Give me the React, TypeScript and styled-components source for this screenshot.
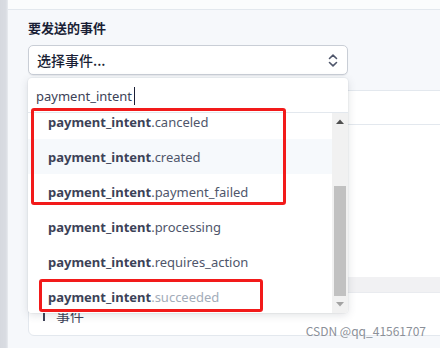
import React from "react"
import styled, {createGlobalStyle} from "styled-components"

const GlobalStyle = createGlobalStyle`
    html, body {
        margin: 0;
        padding: 0;
        background: #f6f8fb;
        overflow: hidden;
    }
    * {
        box-sizing: border-box;
    }
`

const FONT = `"Noto Sans", "Noto Sans CJK SC", sans-serif`

const Page = styled.div`
    position: relative;
    display: flex;
    width: 440px;
    height: 348px;
    font-family: ${FONT};
    color: #3c4257;
`

const SideStrip = styled.div`
    width: 8px;
    flex-shrink: 0;
    background: linear-gradient(to right, #d6d9df 0%, #d9dce2 75%, #e9ecf0 100%);
`

const Main = styled.div`
    flex: 1;
    display: flex;
    flex-direction: column;
    overflow: hidden;
`

const TopBar = styled.div`
    height: 10px;
    flex-shrink: 0;
    background: #fbfcfd;
    border-bottom: 1px solid #e3e8ee;
`

const Header = styled.div`
    padding: 9px 20px 0 20px;
    display: flex;
    flex-direction: column;
`

const Title = styled.h3`
    margin: 0 0 8px 0;
    font-family: "Noto Sans CJK SC", sans-serif;
    font-size: 13px;
    font-weight: 700;
    line-height: 18px;
    color: #1a1f36;
`

const SelectWrap = styled.div`
    position: relative;
    width: 320px;
    z-index: 10;
`

const SelectBox = styled.div`
    display: flex;
    align-items: center;
    justify-content: space-between;
    height: 30px;
    padding: 0 9px 0 8px;
    background: #fff;
    border: 1px solid #c9ced6;
    border-radius: 5px;
    box-shadow: 0 1px 1px rgba(0, 0, 0, 0.06);
    font-family: "Noto Sans CJK SC", sans-serif;
    font-size: 14px;
    font-weight: 500;
    color: #1a1f36;
`

const Popover = styled.div`
    position: absolute;
    top: calc(100% + 3px);
    left: 0;
    width: 320px;
    background: #fff;
    border-radius: 4px;
    box-shadow: 0 2px 8px rgba(60, 66, 87, 0.16), 0 0 0 1px rgba(60, 66, 87, 0.04);
    overflow: hidden;
`

const SearchRow = styled.div`
    display: flex;
    align-items: center;
    height: 35px;
    padding: 2px 8px 0 8px;
    border-bottom: 1px solid #e3e8ee;
    font-size: 13px;
    color: #3c4257;
`

const Caret = styled.span`
    display: inline-block;
    width: 1px;
    height: 18px;
    margin-left: 2px;
    background: #1a1f36;
`

const ListArea = styled.div`
    display: flex;
    height: 200px;
`

const Items = styled.div`
    flex: 1;
    overflow: hidden;
`

const ItemList = styled.ul`
    list-style: none;
    margin: -9px 0 0 0;
    padding: 0;
`

const Item = styled.li<{$hover?: boolean}>`
    display: flex;
    align-items: center;
    height: 35px;
    padding-left: 20px;
    font-size: 13px;
    background: ${({$hover}) => $hover ? "#f6f9fc" : "#fff"};
    white-space: nowrap;
`

const Prefix = styled.b`
    font-weight: 700;
    color: #3c4257;
`

const Suffix = styled.span<{$muted?: boolean}>`
    color: ${({$muted}) => $muted ? "#a3acb9" : "#4f566b"};
`

const Scrollbar = styled.div`
    width: 16px;
    flex-shrink: 0;
    display: flex;
    flex-direction: column;
    background: #f1f1f1;
`

const ArrowBox = styled.div`
    height: 17px;
    display: flex;
    align-items: center;
    justify-content: center;
`

const Track = styled.div`
    flex: 1;
    display: flex;
    flex-direction: column;
    justify-content: flex-end;
    padding: 0 2px;
`

const Thumb = styled.div`
    height: 110px;
    background: #c1c1c1;
`

const Card = styled.div`
    margin: 15px -20px 0 20px;
    height: 246px;
    background: #fff;
    border: 1px solid #e3e8ee;
    border-radius: 0 0 6px 6px;
    display: flex;
    flex-direction: column;
`

const CardHead = styled.div`
    height: 34px;
    border-bottom: 1px solid #e3e8ee;
`

const CardBody = styled.div`
    flex: 1;
`

const Band = styled.div`
    height: 16px;
    background: #f1f1f3;
    border-bottom: 1px solid #e9ebef;
`

const CardFoot = styled.div`
    height: 42px;
    display: flex;
    align-items: center;
    padding: 2px 0 0 14px;
    font-family: "Noto Sans CJK SC", sans-serif;
    font-size: 14px;
    color: #3c4257;
`

const Bar = styled.span`
    display: inline-block;
    width: 2px;
    height: 12px;
    margin-right: 11px;
    background: #3c4257;
`

const Annotation = styled.div<{$left: number, $top: number, $w: number, $h: number}>`
    position: absolute;
    left: ${({$left}) => $left}px;
    top: ${({$top}) => $top}px;
    width: ${({$w}) => $w}px;
    height: ${({$h}) => $h}px;
    border: 3px solid #f21a1a;
    border-radius: 3px;
    z-index: 20;
    pointer-events: none;
`

const Watermark = styled.div`
    position: absolute;
    right: 14px;
    bottom: 9px;
    font-family: "Noto Sans CJK SC", sans-serif;
    font-size: 12px;
    color: #8b9099;
    z-index: 5;
`

const Chevrons = () => (
    <svg width="10" height="13" viewBox="0 0 10 13" fill="none" stroke="#4f566b" strokeWidth="1.6" strokeLinecap="round" strokeLinejoin="round">
        <polyline points="1.5,4.5 5,1.2 8.5,4.5" />
        <polyline points="1.5,8.5 5,11.8 8.5,8.5" />
    </svg>
)

const Tri = ({up}: {up?: boolean}) => (
    <svg width="8" height="5" viewBox="0 0 8 5">
        <polygon points={up ? "0,5 4,0.5 8,5" : "0,0 8,0 4,4.5"} fill={up ? "#505050" : "#a3a3a3"} />
    </svg>
)

const events = [
    {name: "canceled"},
    {name: "created", hover: true},
    {name: "payment_failed"},
    {name: "processing"},
    {name: "requires_action"},
    {name: "succeeded", muted: true},
]

export default function App() {
    return (
        <>
            <GlobalStyle />
            <Page>
                <SideStrip />
                <Main>
                    <TopBar />
                    <Header>
                        <Title>要发送的事件</Title>
                        <SelectWrap>
                            <SelectBox>
                                <span>选择事件...</span>
                                <Chevrons />
                            </SelectBox>
                            <Popover>
                                <SearchRow>
                                    payment_intent<Caret />
                                </SearchRow>
                                <ListArea>
                                    <Items>
                                        <ItemList>
                                            {events.map(e => (
                                                <Item key={e.name} $hover={e.hover}>
                                                    <Prefix>payment_intent</Prefix>
                                                    <Suffix $muted={e.muted}>.{e.name}</Suffix>
                                                </Item>
                                            ))}
                                        </ItemList>
                                    </Items>
                                    <Scrollbar>
                                        <ArrowBox><Tri up /></ArrowBox>
                                        <Track><Thumb /></Track>
                                        <ArrowBox><Tri /></ArrowBox>
                                    </Scrollbar>
                                </ListArea>
                            </Popover>
                        </SelectWrap>
                    </Header>
                    <Card>
                        <CardHead />
                        <CardBody />
                        <Band />
                        <CardFoot>
                            <Bar />事件
                        </CardFoot>
                    </Card>
                </Main>
                <Annotation $left={31} $top={108} $w={255} $h={97} />
                <Annotation $left={39} $top={279} $w={224} $h={33} />
                <Watermark>CSDN @qq_41561707</Watermark>
            </Page>
        </>
    )
}
